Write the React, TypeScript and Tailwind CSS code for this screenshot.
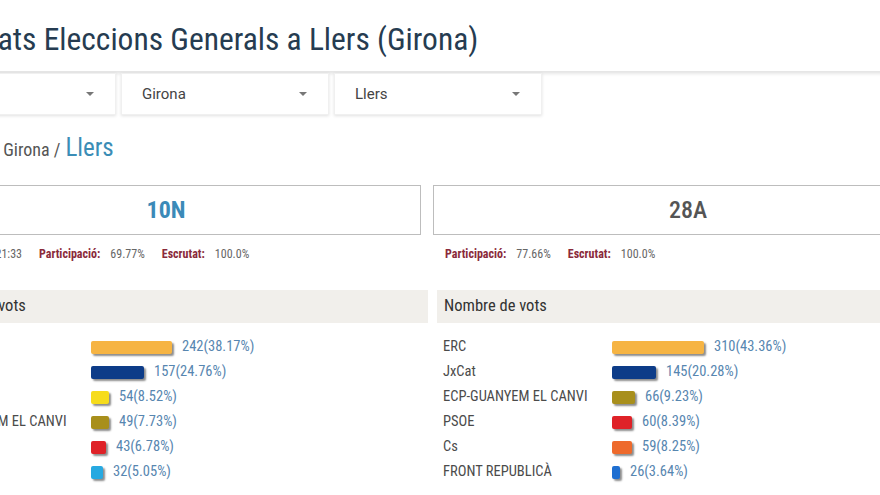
import React from "react";

type Row = { name: string; votes: string; width: number; color: string };

const left10N: Row[] = [
  { name: "ERC", votes: "242(38.17%)", width: 81, color: "bg-[#f6b443]" },
  { name: "JxCat", votes: "157(24.76%)", width: 53, color: "bg-[#0d3c88]" },
  { name: "CUP-PR", votes: "54(8.52%)", width: 18, color: "bg-[#f6dc1c]" },
  { name: "ECP-GUANYEM EL CANVI", votes: "49(7.73%)", width: 18, color: "bg-[#a88f1c]" },
  { name: "PSOE", votes: "43(6.78%)", width: 15, color: "bg-[#df2228]" },
  { name: "PP", votes: "32(5.05%)", width: 12, color: "bg-[#27a9e1]" },
];

const right28A: Row[] = [
  { name: "ERC", votes: "310(43.36%)", width: 92, color: "bg-[#f6b443]" },
  { name: "JxCat", votes: "145(20.28%)", width: 44, color: "bg-[#0d3c88]" },
  { name: "ECP-GUANYEM EL CANVI", votes: "66(9.23%)", width: 23, color: "bg-[#a88f1c]" },
  { name: "PSOE", votes: "60(8.39%)", width: 20, color: "bg-[#df2228]" },
  { name: "Cs", votes: "59(8.25%)", width: 20, color: "bg-[#ee6a2c]" },
  { name: "FRONT REPUBLICÀ", votes: "26(3.64%)", width: 8, color: "bg-[#1f6fd1]" },
];

const Caret = () => (
  <svg width="10" height="6" viewBox="0 0 10 6" className="text-[#777]">
    <path d="M1 1h8L5 5z" fill="currentColor" />
  </svg>
);

const Select = ({ value }: { value: string }) => (
  <div className="w-[208px] h-[42px] bg-white flex items-center justify-between pl-[20px] pr-[20px] shadow-[0_1px_3px_rgba(0,0,0,0.12)] border border-[#f0f0f0]">
    <span className="text-[15px] text-[#444] [font-stretch:normal]">{value}</span>
    <Caret />
  </div>
);

const VoteTable = ({ rows }: { rows: Row[] }) => (
  <div className="w-[512px]">
    <div className="h-[33px] bg-[#f1efeb] flex items-center pl-[7px] text-[16.5px] text-[#333]">
      Nombre de vots
    </div>
    <div className="pt-[12px] flex flex-col">
      {rows.map((r) => (
        <div key={r.name} className="h-[25px] flex items-center pl-[6px]">
          <span className="w-[169px] text-[14.5px] text-[#4b4b4b] whitespace-nowrap">{r.name}</span>
          <span
            className={`h-[13px] rounded-[2px] shadow-[2px_2px_2px_rgba(0,0,0,0.45)] ${r.color}`}
            style={{ width: r.width }}
          />
          <span className="ml-[10px] text-[14.5px] text-[#5786b0]">{r.votes}</span>
        </div>
      ))}
    </div>
  </div>
);

const Stat = ({ label, value }: { label: string; value: string }) => (
  <span className="flex items-center gap-[10px]">
    <span className="font-bold text-[#8a2a3a]">{label}</span>
    <span className="text-[#666]">{value}</span>
  </span>
);

export default function App() {
  return (
    <div className="w-[880px] h-[495px] overflow-hidden bg-white font-['Roboto',sans-serif] [font-stretch:semi-condensed]">
      <div className="w-[1040px] -ml-[90px]">
        <div className="h-[72px] pl-[10px] pt-[21px] shadow-[0_3px_4px_-2px_rgba(0,0,0,0.15)] border-b border-[#e6e6e6]">
          <h1 className="text-[31.5px] leading-[38px] text-[#263c51]">
            Resultats Eleccions Generals a Llers (Girona)
          </h1>
        </div>
        <div className="flex gap-[5px] mt-[1px] -ml-[2px]">
          <Select value="Girona" />
          <Select value="Girona" />
          <Select value="Llers" />
        </div>
        <div className="mt-[14px] pl-[7px] flex items-baseline gap-[5px] text-[#555]">
          <span className="text-[18px]">Catalunya /</span>
          <span className="text-[18px]">Girona /</span>
          <span className="text-[25px] text-[#3b8db6]">Llers</span>
        </div>
        <div className="mt-[18px] flex gap-[12px] pl-[1px]">
          <div className="w-[510px]">
            <div className="h-[50px] border border-[#bdbdbd] flex items-center justify-center text-[24px] font-bold text-[#3b8ab8]">
              10N
            </div>
            <div className="mt-[10px] pl-[12px] flex items-center gap-[17px] text-[12px]">
              <span className="w-[99px] flex justify-end text-[#666] whitespace-nowrap overflow-hidden">
                Actualitzat: 21:33
              </span>
              <Stat label="Participació:" value="69.77%" />
              <Stat label="Escrutat:" value="100.0%" />
            </div>
          </div>
          <div className="w-[510px]">
            <div className="h-[50px] border border-[#bdbdbd] flex items-center justify-center text-[24px] font-medium text-[#555]">
              28A
            </div>
            <div className="mt-[10px] pl-[12px] flex items-center gap-[17px] text-[12px]">
              <Stat label="Participació:" value="77.66%" />
              <Stat label="Escrutat:" value="100.0%" />
            </div>
          </div>
        </div>
        <div className="mt-[27px] flex gap-[9px] pl-[6px]">
          <VoteTable rows={left10N} />
          <VoteTable rows={right28A} />
        </div>
      </div>
    </div>
  );
}
